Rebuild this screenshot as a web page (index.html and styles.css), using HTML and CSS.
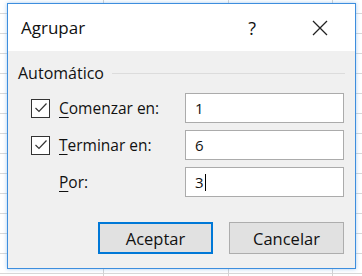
FILE: index.html
```html
<!DOCTYPE html>
<html lang="es">
<head>
  <meta charset="UTF-8" />
  <title>Agrupar</title>
  <link rel="stylesheet" href="styles.css">
</head>
<body>
  <div class="dialog">
    <div class="titlebar">
      <span class="title">Agrupar</span>
      <span class="help">?</span>
      <svg class="close" width="16" height="16" viewBox="0 0 16 16">
        <path d="M1 1 L15 15 M15 1 L1 15" stroke="#222" stroke-width="1.3" fill="none"/>
      </svg>
    </div>

    <div class="content">
      <div class="group-head">
        <span>Automático</span>
        <div class="rule"></div>
      </div>

      <div class="fields">
        <span class="check">
          <svg width="14" height="14" viewBox="0 0 14 14">
            <polyline points="1.5,7 5,10.5 12.5,2.5" stroke="#333" stroke-width="1.2" fill="none"/>
          </svg>
        </span>
        <label><u>C</u>omenzar en:</label>
        <div class="box">1</div>

        <span class="check">
          <svg width="14" height="14" viewBox="0 0 14 14">
            <polyline points="1.5,7 5,10.5 12.5,2.5" stroke="#333" stroke-width="1.2" fill="none"/>
          </svg>
        </span>
        <label><u>T</u>erminar en:</label>
        <div class="box">6</div>

        <span></span>
        <label><u>P</u>or:</label>
        <div class="box">3<span class="caret"></span></div>
      </div>

      <div class="buttons">
        <button class="primary">Aceptar</button>
        <button>Cancelar</button>
      </div>
    </div>
  </div>
</body>
</html>
```

FILE: styles.css
```css
body {
  margin: 0;
  height: 276px;
  overflow: hidden;
  font-family: "Open Sans", "Noto Sans", sans-serif;
  color: #111;
  background-color: #fff;
  background-image:
    linear-gradient(90deg, transparent 103px, #d4d4d4 103px, #d4d4d4 104px, transparent 104px,
      transparent 228px, #d4d4d4 228px, #d4d4d4 229px, transparent 229px,
      transparent 332px, #d4d4d4 332px, #d4d4d4 333px, transparent 333px),
    repeating-linear-gradient(180deg, transparent 0, transparent 13px, #d8d8d8 13px, #d8d8d8 14px, transparent 14px, transparent 20px);
}
.dialog {
  margin: 3px 0 0 7px;
  width: 347px;
  height: 264px;
  border: 1px solid #3d8ede;
  background: #f0f0f0;
  box-shadow: 0 0 4px rgba(60, 140, 220, 0.45);
}
.titlebar {
  height: 47px;
  background: #fff;
  display: flex;
  align-items: center;
  padding-left: 13px;
}
.title {
  font-size: 17px;
  flex: 1;
}
.help {
  font-size: 18px;
  margin-right: 56px;
}
.close {
  margin-right: 27px;
}
.content {
  padding: 12px 10px 0 10px;
}
.group-head {
  display: flex;
  align-items: center;
  font-size: 16px;
  height: 20px;
}
.rule {
  flex: 1;
  height: 1px;
  background: #dcdcdc;
  margin-left: 8px;
}
.fields {
  display: grid;
  grid-template-columns: 19px 117px 159px;
  column-gap: 9px;
  row-gap: 7px;
  margin: 10px 0 0 13px;
  align-items: center;
}
.check {
  width: 17px;
  height: 17px;
  border: 1px solid #333;
  background: #fff;
  display: flex;
  align-items: center;
  justify-content: center;
}
label {
  font-size: 15.5px;
}
label u {
  text-underline-offset: 3px;
}
.box {
  height: 28px;
  border: 1px solid #ababab;
  background: #fff;
  font-size: 15px;
  padding-left: 9px;
  display: flex;
  align-items: center;
}
.caret {
  display: inline-block;
  width: 1px;
  height: 17px;
  background: #000;
  margin-left: 1px;
}
.buttons {
  display: flex;
  justify-content: flex-end;
  gap: 16px;
  margin-top: 25px;
  padding-right: 1px;
}
button {
  width: 115px;
  height: 32px;
  font-family: inherit;
  font-size: 16.5px;
  color: #111;
  background: #e1e1e1;
  border: 1px solid #adadad;
}
button.primary {
  border: 2px solid #0078d7;
}
```
